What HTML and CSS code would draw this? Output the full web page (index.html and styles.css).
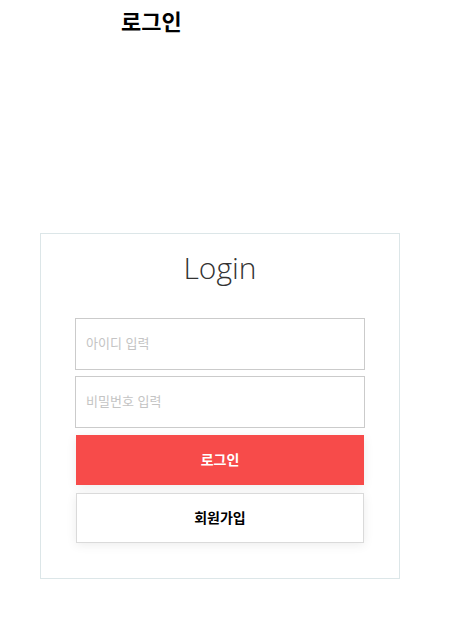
FILE: index.html
```html
<!DOCTYPE html>
<html lang="ko">
<head>
<meta charset="utf-8">
<title>로그인</title>
<link rel="stylesheet" href="styles.css">
</head>
<body>
<h1 class="page-title">로그인</h1>
<div class="card">
  <h2 class="card-title">Login</h2>
  <form class="form">
    <input class="field" type="text" placeholder="아이디 입력">
    <input class="field" type="password" placeholder="비밀번호 입력">
    <button class="btn btn-primary" type="button">로그인</button>
    <button class="btn btn-secondary" type="button">회원가입</button>
  </form>
</div>
</body>
</html>
```
FILE: styles.css
```css
html, body {
  margin: 0;
  padding: 0;
  background: #fff;
}
body {
  font-family: "Noto Sans CJK KR", "Noto Sans", sans-serif;
  color: #000;
}
.page-title {
  margin: 0;
  padding: 5px 0 0 121px;
  font-size: 22px;
  line-height: 30px;
  font-weight: 700;
}
.card {
  margin: 198px 0 0 40px;
  width: 290px;
  padding: 0 34px 35px;
  border: 1px solid #dce6e8;
}
.card-title {
  margin: 0;
  padding: 14px 0 2px;
  text-align: center;
  font-family: "Open Sans", "Noto Sans", sans-serif;
  font-weight: 300;
  font-size: 30px;
  line-height: 40px;
  color: #333;
}
.form {
  display: flex;
  flex-direction: column;
  margin-top: 28px;
}
.field {
  box-sizing: border-box;
  height: 52px;
  width: 290px;
  margin: 0 0 6px;
  padding: 0 10px 4px;
  border: 1px solid #cbcbcb;
  font-family: "Noto Sans CJK KR", sans-serif;
  font-size: 13px;
  outline: none;
}
.field::placeholder {
  color: #c4c4c4;
}
.btn {
  box-sizing: border-box;
  height: 50px;
  width: 288px;
  margin: 1px 1px 0;
  padding: 0 0 3px;
  font-family: "Noto Sans CJK KR", sans-serif;
  font-size: 14px;
  font-weight: 700;
  cursor: pointer;
  box-shadow: 0 2px 10px rgba(0, 0, 0, 0.08);
}
.btn-primary {
  background: #f74b4a;
  color: #fff;
  border: none;
}
.btn-secondary {
  margin-top: 8px;
  background: #fff;
  color: #000;
  border: 1px solid #dadada;
}
```
